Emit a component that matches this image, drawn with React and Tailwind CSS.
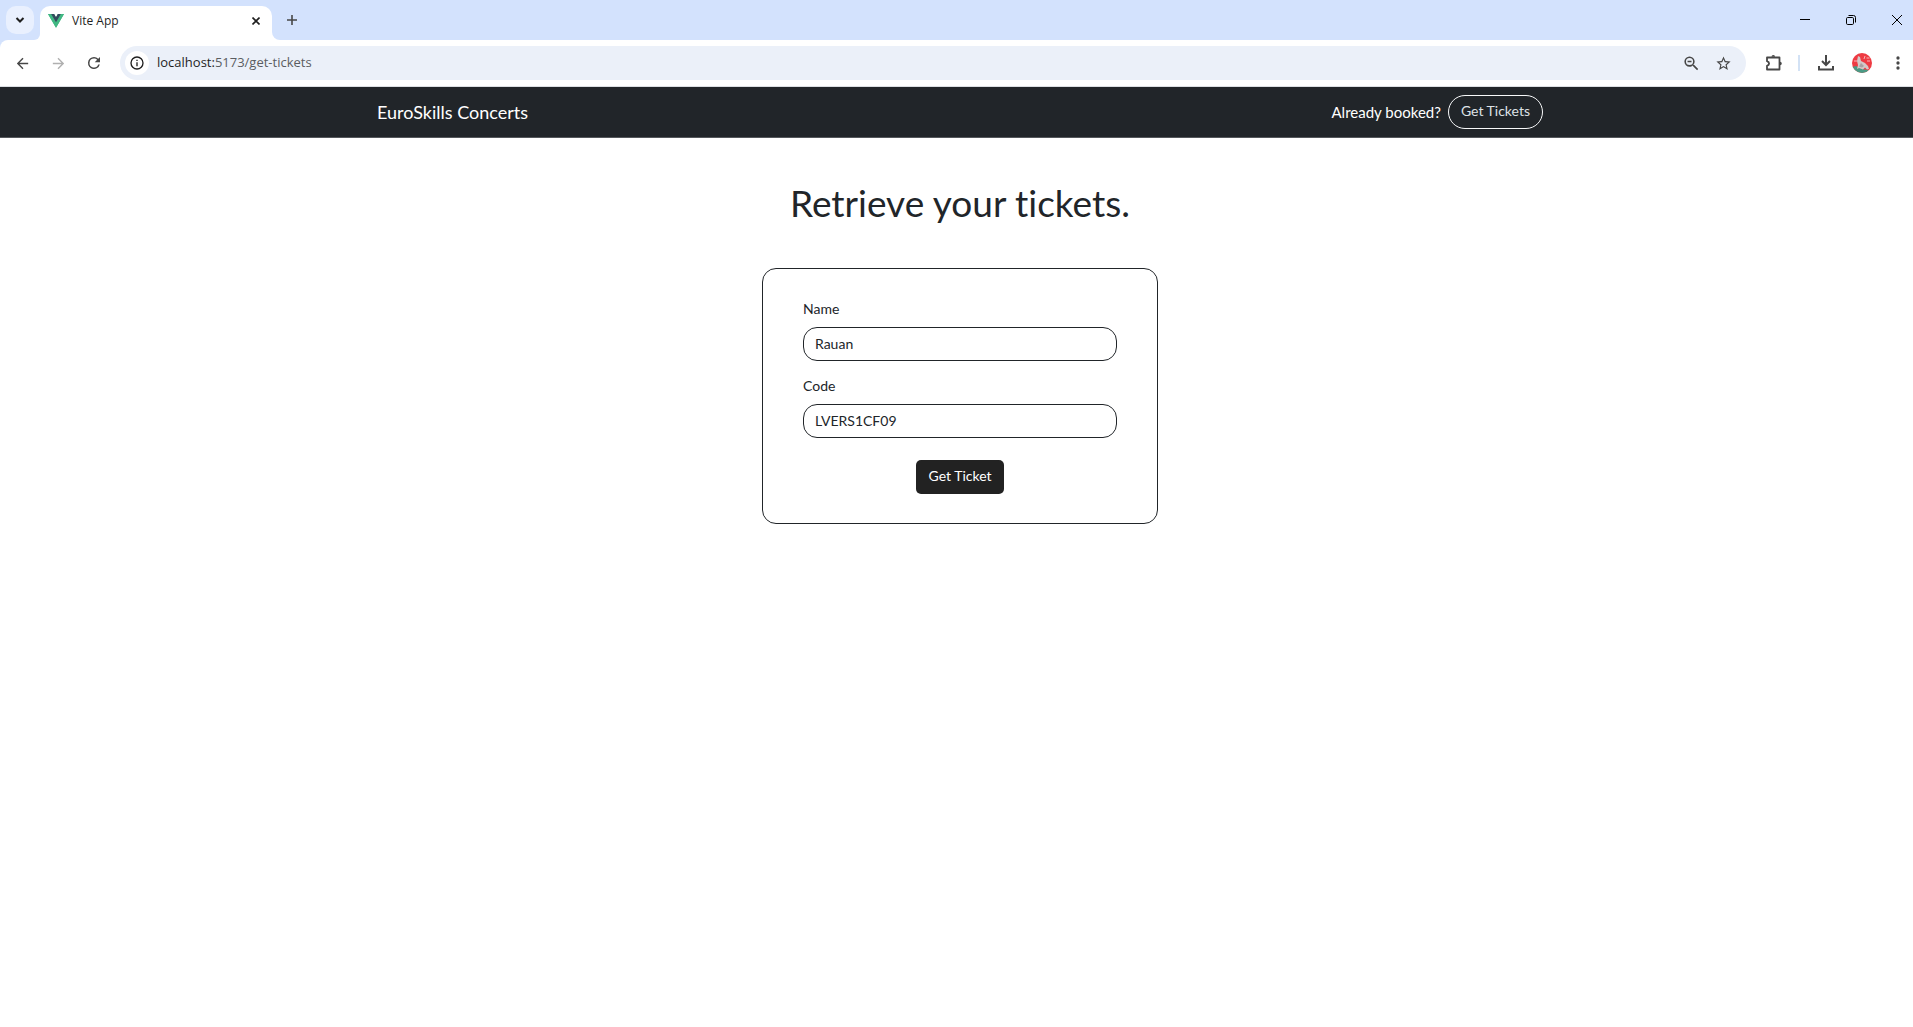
import { useState } from "react";

const materialIcons = {
  back: "M20 11H7.83l5.59-5.59L12 4l-8 8 8 8 1.41-1.41L7.83 13H20z",
  forward: "M12 4l-1.41 1.41L16.17 11H4v2h12.17l-5.58 5.59L12 20l8-8z",
  reload:
    "M17.65 6.35A7.96 7.96 0 0 0 12 4a8 8 0 1 0 7.73 10h-2.08A6 6 0 1 1 12 6c1.66 0 3.14.69 4.22 1.78L13 11h7V4z",
  info: "M11 7h2v2h-2zm0 4h2v6h-2zm1-9a10 10 0 1 0 0 20 10 10 0 0 0 0-20zm0 18a8 8 0 1 1 0-16 8 8 0 0 1 0 16z",
  zoomOut:
    "M15.5 14h-.79l-.28-.27A6.47 6.47 0 0 0 16 9.5 6.5 6.5 0 1 0 9.5 16c1.61 0 3.09-.59 4.23-1.57l.27.28v.79l5 4.99L20.49 19l-4.99-5zm-6 0a4.5 4.5 0 1 1 0-9 4.5 4.5 0 0 1 0 9zM7 8.5h5v2H7z",
  star: "M22 9.24l-7.19-.62L12 2 9.19 8.63 2 9.24l5.46 4.73L5.82 21 12 17.27 18.18 21l-1.63-7.03L22 9.24zM12 15.4l-3.76 2.27 1-4.28-3.32-2.88 4.38-.38L12 6.1l1.71 4.04 4.38.38-3.32 2.88 1 4.28L12 15.4z",
  more: "M12 8a2 2 0 1 0 0-4 2 2 0 0 0 0 4zm0 2a2 2 0 1 0 0 4 2 2 0 0 0 0-4zm0 6a2 2 0 1 0 0 4 2 2 0 0 0 0-4z",
};

function Icon({ name, className }) {
  return (
    <svg viewBox="0 0 24 24" fill="currentColor" aria-hidden="true" className={className}>
      <path d={materialIcons[name]} />
    </svg>
  );
}

function IconButton({ label, children, className = "" }) {
  return (
    <button
      type="button"
      aria-label={label}
      className={`flex shrink-0 items-center justify-center ${className}`}
    >
      {children}
    </button>
  );
}

function VueLogo() {
  return (
    <svg viewBox="0 0 256 222" aria-hidden="true" className="w-4 shrink-0">
      <path fill="#41B883" d="M204.8 0H256L128 220.8 0 0h97.92L128 51.2 157.44 0z" />
      <path fill="#41B883" d="M0 0l128 220.8L256 0h-51.2L128 132.48 50.56 0z" />
      <path fill="#35495E" d="M50.56 0L128 133.12 204.8 0h-47.36L128 51.2 97.92 0z" />
    </svg>
  );
}

function Avatar() {
  return (
    <svg viewBox="0 0 20 20" aria-hidden="true" className="size-5 rounded-full">
      <rect width="20" height="20" fill="#ee3b43" />
      <path d="M0 14l4-1 6 3 6 1v3H0z" fill="#4a9a85" />
      <path d="M6 3l2 1 1 4 4 2 3 3 1 3-2 .5-2-2-2 2-4-1.5-2 1 1-4-1-4z" fill="#d3c9c8" />
      <path d="M9 10l3 3-2 1.5-3-1z" fill="#aaa1a3" />
      <path d="M2 8h3M15 8h3M12 6l1-3M14.500 5h3" stroke="#f8b6b8" strokeWidth="1" />
    </svg>
  );
}

function TabStrip() {
  return (
    <div className="flex h-10 items-end bg-[#d3e2fd] pl-1.5">
      <IconButton label="Search tabs" className="mb-1.5 size-7 rounded-[10px] bg-[#e9f0fe] text-[#1f1f1f]">
        <svg viewBox="0 0 10 10" fill="none" stroke="currentColor" strokeWidth="2" className="size-2.5">
          <path d="M1.5 3 5 6.5 8.5 3" />
        </svg>
      </IconButton>
      <div className="flex items-end">
        <div className="size-1.5 bg-white">
          <div className="size-full rounded-br-md bg-[#d3e2fd]" />
        </div>
        <div className="flex h-[34px] w-[232px] items-center rounded-t-[10px] bg-white pr-2 pb-1 pl-2">
          <VueLogo />
          <span className="ml-2 grow text-xs text-[#1f1f1f]">Vite App</span>
          <IconButton label="Close tab" className="size-4 text-[#1f1f1f]">
            <svg viewBox="0 0 8 8" fill="none" stroke="currentColor" strokeWidth="1.6" className="size-2">
              <path d="M.5.5l7 7M7.5.5l-7 7" />
            </svg>
          </IconButton>
        </div>
        <div className="size-2 bg-white">
          <div className="size-full rounded-bl-lg bg-[#d3e2fd]" />
        </div>
      </div>
      <IconButton label="New tab" className="mb-1.5 h-7 w-6 text-[#474747]">
        <svg viewBox="0 0 10 10" fill="none" stroke="currentColor" strokeWidth="1.6" className="size-2.5">
          <path d="M5 0v10M0 5h10" />
        </svg>
      </IconButton>
      <div className="ml-auto flex h-10 text-black">
        <IconButton label="Minimize" className="w-[46px]">
          <svg viewBox="0 0 10 10" fill="none" stroke="currentColor" className="size-2.5">
            <path d="M0 4.5h10" />
          </svg>
        </IconButton>
        <IconButton label="Restore" className="w-[46px]">
          <svg viewBox="0 0 10 10" fill="none" stroke="currentColor" className="size-2.5">
            <rect x=".5" y="2.5" width="7" height="7" rx="1.2" />
            <path d="M2.5.5h5a2 2 0 0 1 2 2v5" />
          </svg>
        </IconButton>
        <IconButton label="Close" className="w-[39px] pl-1.5">
          <svg viewBox="0 0 10 10" fill="none" stroke="currentColor" className="size-2.5">
            <path d="M0 0l10 10M10 0L0 10" />
          </svg>
        </IconButton>
      </div>
    </div>
  );
}

function Toolbar() {
  return (
    <div className="bg-[#d3e2fd]">
      <div className="flex h-[47px] items-center overflow-hidden rounded-tl-lg border-b border-[#dcdfe3] bg-white pl-1 text-[#474747]">
        <IconButton label="Back" className="size-9">
          <Icon name="back" className="size-[17px]" />
        </IconButton>
        <IconButton label="Forward" className="size-9 text-[#b0b0b0]">
          <Icon name="forward" className="size-[17px]" />
        </IconButton>
        <IconButton label="Reload" className="size-9">
          <Icon name="reload" className="size-[18px]" />
        </IconButton>
        <div className="ml-2 flex h-[34px] grow items-center rounded-full bg-[#ebf0f9] pr-[7px] pl-[5px]">
          <IconButton label="View site information" className="size-6 rounded-full bg-white text-[#1f1f1f]">
            <Icon name="info" className="size-4" />
          </IconButton>
          <div className="ml-2 grow text-[13px] text-[#5a5d61]">
            <span className="text-[#1f1f1f]">localhost:</span>5173/get-tickets
          </div>
          <IconButton label="Zoom" className="size-8">
            <Icon name="zoomOut" className="size-[19px]" />
          </IconButton>
          <IconButton label="Bookmark this tab" className="size-8">
            <Icon name="star" className="size-[17px]" />
          </IconButton>
        </div>
        <IconButton label="Extensions" className="ml-3 size-8">
          <svg viewBox="0 0 18 18" fill="none" stroke="currentColor" strokeWidth="1.8" className="size-[18px]">
            <path d="M2 3.5h12.500v12H2v-3.700c2.800-1 2.800-3.600 0-4.600z" strokeLinejoin="round" />
            <path d="M6.500 2.800a1.800 1.800 0 0 1 3.600 0zM15 7.700a1.800 1.800 0 0 1 0 3.600z" fill="currentColor" stroke="none" />
          </svg>
        </IconButton>
        <span className="mx-2 h-4 w-0.5 bg-[#d3e2f5]" />
        <IconButton label="Downloads" className="size-9">
          <svg viewBox="0 0 16 16" fill="none" stroke="currentColor" strokeWidth="2" className="size-4">
            <path d="M8 0v10M4 6l4 4 4-4M1 11v3.5h14V11" />
          </svg>
        </IconButton>
        <IconButton label="Profile" className="size-9">
          <Avatar />
        </IconButton>
        <IconButton label="Menu" className="h-9 w-[33px] pl-[3px]">
          <Icon name="more" className="size-5" />
        </IconButton>
      </div>
    </div>
  );
}

function Navbar() {
  return (
    <header className="border-b border-[#55585c] bg-[#212529] pl-[7px] text-white">
      <div className="mx-auto flex h-[50px] max-w-[1188px] items-center justify-between px-[11px]">
        <a href="/" className="text-lg">
          EuroSkills Concerts
        </a>
        <div className="flex items-center gap-[7px]">
          <span className="text-[15px]">Already booked?</span>
          <a
            href="/get-tickets"
            className="flex h-[34px] items-center rounded-full border border-[#f8f9fa] px-3 pb-0.5 text-sm text-[#dee2e6]"
          >
            Get Tickets
          </a>
        </div>
      </div>
    </header>
  );
}

function Field({ id, label, value, onChange }) {
  return (
    <div className="flex flex-col gap-[7px]">
      <label htmlFor={id} className="text-sm leading-[22px]">
        {label}
      </label>
      <input
        id={id}
        type="text"
        value={value}
        onChange={(event) => onChange(event.target.value)}
        className="h-[34px] w-full rounded-[14px] border border-[#212529] bg-white px-[11px] pb-0.5 text-sm"
      />
    </div>
  );
}

function TicketForm() {
  const [name, setName] = useState("Rauan");
  const [code, setCode] = useState("LVERS1CF09");

  return (
    <form
      onSubmit={(event) => event.preventDefault()}
      className="flex w-full max-w-[396px] flex-col gap-[14px] rounded-[14px] border border-[#212529] px-10 py-[29px]"
    >
      <Field id="name" label="Name" value={name} onChange={setName} />
      <Field id="code" label="Code" value={code} onChange={setCode} />
      <button
        type="submit"
        className="mt-2 h-[34px] self-center rounded-[5px] bg-[#222222] px-3 pb-0.5 text-sm text-white"
      >
        Get Ticket
      </button>
    </form>
  );
}

export default function App() {
  return (
    <div className="min-h-screen bg-white font-['Lato',sans-serif] text-[#212529] [font-variant-ligatures:none]">
      <div className="font-['Open_Sans',sans-serif]">
        <TabStrip />
        <Toolbar />
      </div>
      <Navbar />
      <main className="flex flex-col items-center pt-[43px] pl-[7px]">
        <h1 className="text-[37px] leading-[44px]">Retrieve your tickets.</h1>
        <div className="mt-[43px] flex w-full justify-center">
          <TicketForm />
        </div>
      </main>
    </div>
  );
}
